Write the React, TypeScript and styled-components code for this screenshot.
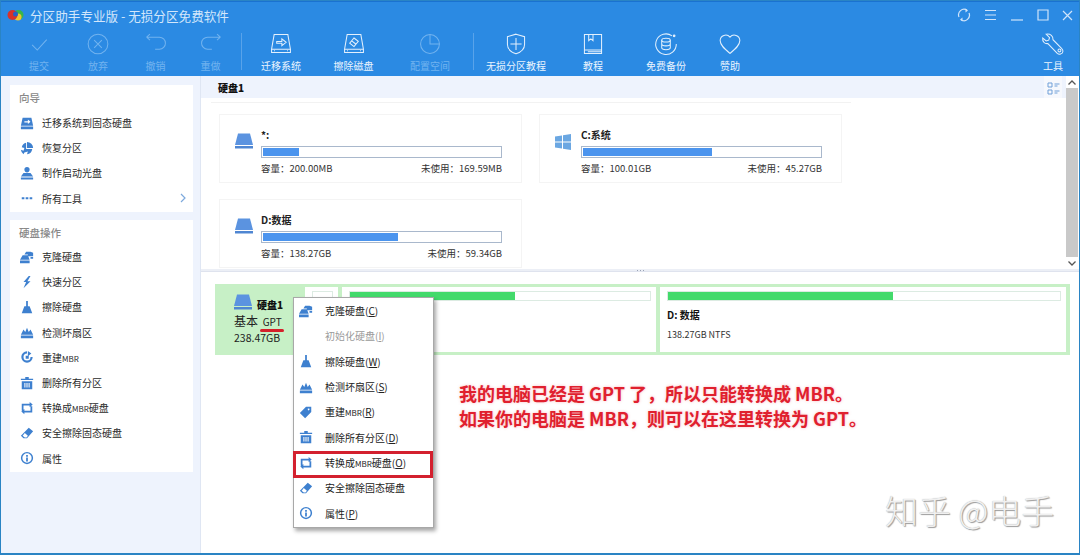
import { ReactNode } from 'react'
import styled, { createGlobalStyle } from 'styled-components'

const CJK = `"Noto Sans CJK SC", "Noto Sans", sans-serif`

const GlobalStyle = createGlobalStyle`
  html, body { margin: 0; padding: 0; background: #fff; }
  * { box-sizing: border-box; }
  body { font-family: ${CJK}; overflow: hidden; }
`

const Small = styled.span`
  font-size: 8px;
`

const toolIcons: Record<string, ReactNode> = {
  check: <path d="M6 15l6 6L23 9" />,
  cancel: (
    <>
      <circle cx="14" cy="14" r="11.5" />
      <path d="M9.5 9.5l9 9M18.5 9.5l-9 9" />
    </>
  ),
  undo: <path d="M3 6h15a6.5 6.5 0 0 1 0 14h-5M3 6l4-3.5M3 6l4 3.5" />,
  redo: <path d="M25 6H10a6.5 6.5 0 0 0 0 14h5M25 6l-4-3.5M25 6l-4 3.5" />,
  migrate: (
    <>
      <path d="M6 3h16l3 17H3zM3 20h22v4H3zM6 22h1M21 22h1" />
      <path d="M9 11h6V8l5 4-5 4v-3H9z" />
    </>
  ),
  wipe: (
    <>
      <path d="M6 3h16l3 17H3zM3 20h22v4H3zM6 22h1M21 22h1" />
      <path d="M14 7l5 4-5 6-5-4zM11 10l5 4" />
    </>
  ),
  pie: (
    <>
      <circle cx="14" cy="14" r="11" />
      <path d="M14 3v11h11" />
    </>
  ),
  shield: (
    <>
      <path d="M14 2.5l10 3v9c0 5.5-4.5 9-10 11-5.5-2-10-5.5-10-11v-9z" />
      <path d="M14 7v14M7.5 14h13" />
    </>
  ),
  book: (
    <>
      <path d="M4 3h20v22H4zM4 21h20M8 23h16" />
      <path d="M9 3v7l2.5-2 2.5 2V3" />
    </>
  ),
  backup: (
    <>
      <path d="M21 4.5A12 12 0 1 0 26 14" />
      <circle cx="23.5" cy="4.5" r="1" fill="#fff" />
      <ellipse cx="14" cy="9.5" rx="5" ry="2.2" />
      <path d="M9 9.5v9c0 1.2 2.2 2.2 5 2.2s5-1 5-2.2v-9M9 14c0 1.2 2.2 2.2 5 2.2s5-1 5-2.2" />
    </>
  ),
  heart: <path d="M14 25C8 20 2.5 15.5 2.5 10A6.5 6.5 0 0 1 14 6a6.5 6.5 0 0 1 11.5 4c0 5.5-5.5 10-11.5 15z" />,
  wrench: (
    <>
      <path d="M6 2.5L10 6.5l-1 3-3 1-4-3.5c-.5 4 2 7 6 6.5L19 25c2 1.8 6 1 6.5-2 .5-2-.5-3-1.5-4L14 9c.5-4-3-7.5-8-6.5z" />
      <circle cx="21.5" cy="21.5" r="1.7" />
    </>
  ),
}

const sideIcons: Record<string, ReactNode> = {
  migrate: <path d="M3 2h10l2 9H1zM1 12h14v3H1zM5 6h4V4l3 2.5L9 9V7.5H5z" fillRule="evenodd" />,
  restore: <path d="M8 1a7 7 0 0 1 7 7H8zM7 2v7h7a7 7 0 0 1-6 6l1-3-4 1-1 2a7 7 0 0 1-3-5l3 1 1-3-3-1a7 7 0 0 1 5-5z" />,
  boot: <path d="M8 1a3 3 0 0 1 3 3c0 2-1.5 3.5-3 3.5S5 6 5 4a3 3 0 0 1 3-3zM4 8h8l3 4H1zM1 13h14v2.5H1z" />,
  more: <path d="M2 7h3v2.5H2zM6.5 7h3v2.5h-3zM11 7h3v2.5h-3z" />,
  clone: <path d="M7 2h5l3 1v4H9V5H5zM3 6h6l2 5H0zM0 12h11v3H0zM12 8h3v2h-3z" />,
  speed: <path d="M10 1L4 8h3l-3 7 8-8H8.5L12 1z" />,
  broom: <path d="M7 1h2v6h2l3 8H2l3-8h2z" />,
  scan: <path d="M1 11l3-6 2 3 2-5 2 5 2-3 3 6zM1 12h14v3H1z" fillRule="evenodd" />,
  rebuild: <path d="M8 1.5a6.5 6.5 0 1 0 6.5 6.5H12A4 4 0 1 1 8 4zM9 1l4 3-4 3zM6.5 6.5H10V10H6.5z" />,
  trash: <path d="M6 1h4v2h5v1.5H1V3h5zM2 6h12v9H2zM5 8v5h1.2V8zM7.4 8v5h1.2V8zM9.8 8v5H11V8z" fillRule="evenodd" />,
  convert: <path d="M2 3h9V1l3.5 3L11 7V5H4v6H2zM14 13H5v2l-3.5-3L5 9v2h7V6h2z" />,
  erase: <path d="M10 2l5 4-7 8H4L1 11zM3 11l2.5 2h2L9 11 5.5 8z" fillRule="evenodd" />,
  info: <path d="M8 1a7 7 0 1 1 0 14A7 7 0 0 1 8 1zm0 1.7a5.3 5.3 0 1 0 0 10.6A5.3 5.3 0 0 0 8 2.7zM7 4.5h2v2H7zM7 7.5h2V12H7z" fillRule="evenodd" />,
  tag: <path d="M8 2h6v6l-7 7-6-6zM11 4a1 1 0 1 0 .01 0z" fillRule="evenodd" />,
}

const guideRows = [
  { icon: 'migrate', label: '迁移系统到固态硬盘' },
  { icon: 'restore', label: '恢复分区' },
  { icon: 'boot', label: '制作启动光盘' },
  { icon: 'more', label: '所有工具', arrow: true },
]

const diskRows = [
  { icon: 'clone', label: '克隆硬盘' },
  { icon: 'speed', label: '快速分区' },
  { icon: 'broom', label: '擦除硬盘' },
  { icon: 'scan', label: '检测坏扇区' },
  { icon: 'rebuild', label: <>重建<Small>MBR</Small></> },
  { icon: 'trash', label: '删除所有分区' },
  { icon: 'convert', label: <>转换成<Small>MBR</Small>硬盘</> },
  { icon: 'erase', label: '安全擦除固态硬盘' },
  { icon: 'info', label: '属性' },
]

type MenuItem = { icon?: string; label: ReactNode; key?: string; off?: boolean; hot?: boolean }

const menuRows: MenuItem[] = [
  { icon: 'clone', label: '克隆硬盘', key: 'C' },
  { label: '初始化硬盘', key: 'I', off: true },
  { icon: 'broom', label: '擦除硬盘', key: 'W' },
  { icon: 'scan', label: '检测坏扇区', key: 'S' },
  { icon: 'tag', label: <>重建<Small>MBR</Small></>, key: 'R' },
  { icon: 'trash', label: '删除所有分区', key: 'D' },
  { icon: 'convert', label: <>转换成<Small>MBR</Small>硬盘</>, key: 'O', hot: true },
  { icon: 'erase', label: '安全擦除固态硬盘' },
  { icon: 'info', label: '属性', key: 'P' },
]

type ToolItem = { icon?: string; label?: string; w?: number; off?: boolean; divider?: boolean }

const tools: ToolItem[] = [
  { icon: 'check', label: '提交', w: 58, off: true },
  { icon: 'cancel', label: '放弃', w: 60, off: true },
  { icon: 'undo', label: '撤销', w: 55, off: true },
  { icon: 'redo', label: '重做', w: 55, off: true },
  { divider: true },
  { icon: 'migrate', label: '迁移系统', w: 72 },
  { icon: 'wipe', label: '擦除磁盘', w: 73 },
  { icon: 'pie', label: '配置空间', w: 80, off: true },
  { divider: true },
  { icon: 'shield', label: '无损分区教程', w: 78 },
  { icon: 'book', label: '教程', w: 76 },
  { icon: 'backup', label: '免费备份', w: 70 },
  { icon: 'heart', label: '赞助', w: 58 },
]

const cards = [
  { name: '*:', win: false, pct: 15, cap: '200.00MB', free: '169.59MB' },
  { name: 'C:系统', win: true, pct: 54.5, cap: '100.01GB', free: '45.27GB' },
  { name: 'D:数据', win: false, pct: 57, cap: '138.27GB', free: '59.34GB' },
]

const DriveIcon = ({ size = 18 }: { size?: number }) => (
  <svg width={size} height={size} viewBox="0 0 18 18">
    <path d="M3 1.5h12l3 11.5H0z" fill="#5b93e0" />
    <path d="M0 14h18v2.5H0z" fill="#4f86d2" />
  </svg>
)

const WinIcon = () => (
  <svg width="16" height="16" viewBox="0 0 16 16">
    <path d="M0 2.5l7-1v6H0zM8 1.3L16 0v7.5H8zM0 8.5h7v6l-7-1zM8 8.5h8V16l-8-1.3z" fill="#6ba7e2" />
  </svg>
)

const SideIcon = ({ name }: { name: string }) => (
  <svg width="14" height="14" viewBox="0 0 16 16" fill="#3e80cf">
    {sideIcons[name]}
  </svg>
)

export default function App() {
  return (
    <Window>
      <GlobalStyle />
      <TitleBar>
        <svg width="17" height="14" viewBox="0 0 17 14">
          <circle cx="11.5" cy="7" r="5" fill="#39b54a" />
          <circle cx="11" cy="9" r="3.5" fill="#f0c330" />
          <circle cx="5.5" cy="7" r="5" fill="#d8322a" />
          <circle cx="8.5" cy="6" r="2.5" fill="#2b5fc0" />
        </svg>
        <TitleText>分区助手专业版 - 无损分区免费软件</TitleText>
        <WinControls>
          <svg width="14" height="14" viewBox="0 0 14 14">
            <path d="M2 9A5.5 5.5 0 0 1 10 2.2M12 5a5.5 5.5 0 0 1-8 6.8" />
            <path d="M8.5 .5l2.5 2-2.5 2zM5.5 9.5l-2.5 2 2.5 2z" fill="#cfe4fa" stroke="none" />
          </svg>
          <svg width="13" height="12" viewBox="0 0 13 12">
            <path d="M1 1.5h11M1 6h11M1 10.5h11" />
          </svg>
          <svg width="14" height="12" viewBox="0 0 14 12">
            <path d="M1 11h12" />
          </svg>
          <svg width="12" height="12" viewBox="0 0 12 12">
            <path d="M1 1h10v10H1z" />
          </svg>
          <svg width="11" height="11" viewBox="0 0 11 11">
            <path d="M1 1l9 9M10 1l-9 9" />
          </svg>
        </WinControls>
      </TitleBar>

      <Toolbar>
        {tools.map((t, i) =>
          t.divider ? (
            <ToolDivider key={i} />
          ) : (
            <Tool key={i} $w={t.w!} $off={t.off}>
              <svg width="24" height="24" viewBox="0 0 28 28">
                {toolIcons[t.icon!]}
              </svg>
              <span>{t.label}</span>
            </Tool>
          ),
        )}
        <ToolSpacer />
        <Tool $w={46}>
          <svg width="24" height="24" viewBox="0 0 28 28">
            {toolIcons.wrench}
          </svg>
          <span>工具</span>
        </Tool>
      </Toolbar>

      <Body>
        <Sidebar>
          <SidePanel $h={127}>
            <SideTitle $h={22}>向导</SideTitle>
            {guideRows.map((r) => (
              <SideRow key={r.icon}>
                <SideIcon name={r.icon} />
                <span>{r.label}</span>
                {r.arrow && (
                  <Chevron width="6" height="10" viewBox="0 0 6 10">
                    <path d="M1 1l4 4-4 4" />
                  </Chevron>
                )}
              </SideRow>
            ))}
          </SidePanel>
          <SidePanel $h={252}>
            <SideTitle $h={21}>硬盘操作</SideTitle>
            {diskRows.map((r) => (
              <SideRow key={r.icon}>
                <SideIcon name={r.icon} />
                <span>{r.label}</span>
              </SideRow>
            ))}
          </SidePanel>
        </Sidebar>

        <Main>
          <TopPane>
            <TopContent>
              <PaneHeader>
                <strong>硬盘1</strong>
                <ViewToggle>
                  <svg width="13" height="14" viewBox="0 0 13 14">
                    <path d="M1 1h4v4H1zM1 8h4v4H1zM7.5 2h5M7.5 4h3M7.5 9h5M7.5 11h3" fill="none" stroke="#6f9fd8" />
                  </svg>
                </ViewToggle>
              </PaneHeader>
              <CardGrid>
                {cards.map((c) => (
                  <Card key={c.name}>
                    <CardIcon>{c.win ? <WinIcon /> : <DriveIcon />}</CardIcon>
                    <CardBody>
                      <CardName>{c.name}</CardName>
                      <UsageBar>
                        <UsageFill style={{ width: `${c.pct}%` }} />
                      </UsageBar>
                      <CardStats>
                        <span>容量：{c.cap}</span>
                        <span>未使用：{c.free}</span>
                      </CardStats>
                    </CardBody>
                  </Card>
                ))}
              </CardGrid>
            </TopContent>
            <ScrollBar>
              <ScrollArrow>
                <svg width="8" height="5" viewBox="0 0 8 5">
                  <path d="M.5 4.5L4 1l3.5 3.5" fill="none" stroke="#555" strokeWidth="1.3" />
                </svg>
              </ScrollArrow>
              <ScrollThumb />
              <ScrollArrow>
                <svg width="8" height="5" viewBox="0 0 8 5">
                  <path d="M.5 .5L4 4l3.5-3.5" fill="none" stroke="#555" strokeWidth="1.3" />
                </svg>
              </ScrollArrow>
            </ScrollBar>
          </TopPane>

          <Splitter>
            <i />
            <i />
            <i />
          </Splitter>

          <BottomPane>
            <DiskMap>
              <DiskInfo>
                <DiskHead>
                  <DriveIcon />
                  <strong>硬盘1</strong>
                </DiskHead>
                <DiskKind>
                  基本 <GptTag>GPT</GptTag>
                </DiskKind>
                <DiskSize>238.47GB</DiskSize>
              </DiskInfo>
              <PartTile $w={33}>
                <PartBar />
              </PartTile>
              <PartTile $w={314}>
                <PartBar>
                  <PartFill style={{ width: '55%' }} />
                </PartBar>
              </PartTile>
              <PartTile $w={406}>
                <PartBar>
                  <PartFill style={{ width: '57.3%' }} />
                </PartBar>
                <PartName>D: 数据</PartName>
                <PartMeta>138.27GB NTFS</PartMeta>
              </PartTile>
            </DiskMap>
          </BottomPane>
        </Main>
      </Body>

      <ContextMenu>
        {menuRows.map((m, i) => (
          <MenuRow key={i} $hot={m.hot} $off={m.off}>
            <MenuIcon>{m.icon && <SideIcon name={m.icon} />}</MenuIcon>
            <span>
              {m.label}
              {m.key && (
                <>
                  (<u>{m.key}</u>)
                </>
              )}
            </span>
          </MenuRow>
        ))}
      </ContextMenu>

      <Note>
        我的电脑已经是 GPT 了，所以只能转换成 MBR。
        <br />
        如果你的电脑是 MBR，则可以在这里转换为 GPT。
      </Note>
      <Watermark>知乎 @电手</Watermark>
    </Window>
  )
}

const Window = styled.div`
  position: relative;
  width: 1080px;
  height: 555px;
  display: flex;
  flex-direction: column;
  border: 1px solid #2a84c4;
  border-bottom-width: 2px;
  background: #fff;
  color: #222;
  overflow: hidden;
`

const TitleBar = styled.div`
  height: 26px;
  flex: none;
  display: flex;
  align-items: center;
  padding: 1px 5px 0 6px;
  background: #2b8ae3;
  border-top: 1px solid #1a72d0;
`

const TitleText = styled.div`
  margin-left: 6px;
  font-size: 12.6px;
  color: #d3e7fb;
`

const WinControls = styled.div`
  margin-left: auto;
  display: flex;
  align-items: center;
  gap: 13px;
  padding-right: 1px;

  svg {
    fill: none;
    stroke: #cfe4fa;
    stroke-width: 1.2;
  }
`

const Toolbar = styled.div`
  height: 49px;
  flex: none;
  display: flex;
  align-items: stretch;
  padding: 0 3px 0 9px;
  background: #2b8ae3;
`

const Tool = styled.div<{ $w: number; $off?: boolean }>`
  width: ${(p) => p.$w}px;
  flex: none;
  display: flex;
  flex-direction: column;
  align-items: center;
  padding-top: 5px;
  gap: 2px;
  font-size: 10px;
  line-height: 15px;
  white-space: nowrap;
  color: ${(p) => (p.$off ? '#72b3ef' : '#eaf4fe')};

  svg {
    fill: none;
    stroke: ${(p) => (p.$off ? '#72b3ef' : '#e3f0fd')};
    stroke-width: 1.2;
  }
`

const ToolDivider = styled.div`
  width: 1px;
  margin: 6px 3px 6px 3px;
  background: #59a3ea;
`

const ToolSpacer = styled.div`
  flex: 1;
`

const Body = styled.div`
  flex: 1;
  min-height: 0;
  display: flex;
`

const Sidebar = styled.aside`
  width: 200px;
  flex: none;
  display: flex;
  flex-direction: column;
  gap: 8px;
  padding: 9px 7px 0 9px;
  background: #eef3fd;
  border-right: 1px solid #dfe6f3;
`

const SidePanel = styled.section<{ $h: number }>`
  height: ${(p) => p.$h}px;
  padding-top: 3px;
  background: #fff;
`

const SideTitle = styled.div<{ $h: number }>`
  height: ${(p) => p.$h}px;
  line-height: 20px;
  padding-left: 9px;
  font-size: 10.5px;
  font-weight: 500;
  color: #888;
`

const SideRow = styled.div`
  height: 25.2px;
  display: flex;
  align-items: center;
  gap: 8px;
  padding: 0 6px 0 10px;
  font-size: 10px;
  color: #2a2a2a;
`

const Chevron = styled.svg`
  margin-left: auto;
  margin-right: 1px;
  fill: none;
  stroke: #7da9dc;
  stroke-width: 1.2;
`

const Main = styled.main`
  flex: 1;
  min-width: 0;
  display: flex;
  flex-direction: column;
`

const TopPane = styled.div`
  height: 193px;
  flex: none;
  display: flex;
`

const TopContent = styled.div`
  flex: 1;
  min-width: 0;
`

const PaneHeader = styled.div`
  height: 22px;
  display: flex;
  align-items: center;
  justify-content: space-between;
  padding: 0 4px 0 17px;
  background: #eef3fd;
  font-size: 10px;
  color: #111;

  strong {
    font-weight: 900;
  }
`

const ViewToggle = styled.div`
  width: 18px;
  height: 22px;
  padding-top: 3px;
  display: flex;
  align-items: center;
  justify-content: center;
  background: #f6f8fd;
`

const CardGrid = styled.div`
  margin: 4px 0 0 10px;
  padding: 11px 0 0 8px;
  border-top: 1px solid #f2f2f2;
  width: 640px;
  display: grid;
  grid-template-columns: 303px 303px;
  grid-auto-rows: 69px;
  column-gap: 17px;
  row-gap: 16px;
`

const Card = styled.div`
  display: flex;
  padding: 15px 19px 0 15px;
  border: 1px solid #f4f4f4;
`

const CardIcon = styled.div`
  width: 18px;
  flex: none;
  margin-right: 8px;
  padding-top: 1px;
`

const CardBody = styled.div`
  flex: 1;
  min-width: 0;
`

const CardName = styled.div`
  height: 16px;
  line-height: 10px;
  font-size: 10px;
  font-weight: 700;
  color: #222;
`

const UsageBar = styled.div`
  height: 12px;
  padding: 1px;
  background: #fff;
  border: 1px solid #a9b8cc;
`

const UsageFill = styled.div`
  height: 100%;
  background: #4b94ee;
`

const CardStats = styled.div`
  display: flex;
  justify-content: space-between;
  margin-top: 3px;
  font-size: 9.5px;
  line-height: 14px;
  color: #333;
`

const ScrollBar = styled.div`
  width: 12px;
  flex: none;
  margin-right: 1px;
  display: flex;
  flex-direction: column;
`

const ScrollArrow = styled.div`
  height: 12px;
  flex: none;
  display: flex;
  align-items: center;
  justify-content: center;
`

const ScrollThumb = styled.div`
  flex: 1;
  background: #c9c9c9;
`

const Splitter = styled.div`
  height: 3px;
  flex: none;
  display: flex;
  justify-content: center;
  align-items: center;
  gap: 2px;
  background: #eceff6;
  border-bottom: 1px solid #dfe3ee;

  i {
    width: 1px;
    height: 1px;
    background: #9aa3b5;
  }
`

const BottomPane = styled.div`
  flex: 1;
  padding: 12px 9px 0 14px;
  background: #fff;
`

const DiskMap = styled.div`
  height: 71px;
  display: flex;
  gap: 4px;
  padding: 3px 4px 3px 0;
  background: #c7f0c6;
`

const DiskInfo = styled.div`
  width: 86px;
  flex: none;
  padding: 6px 0 0 19px;
`

const DiskHead = styled.div`
  display: flex;
  align-items: center;
  gap: 5px;
  height: 18px;
  font-size: 10px;
  color: #111;

  strong {
    font-weight: 900;
    padding-top: 4px;
  }
`

const DiskKind = styled.div`
  margin-top: 1px;
  font-size: 12px;
  line-height: 17px;
  color: #222;
  white-space: nowrap;
`

const GptTag = styled.span`
  position: relative;
  margin-left: 2px;
  font-size: 10px;

  &::after {
    content: '';
    position: absolute;
    left: -3px;
    right: -2px;
    bottom: -3px;
    height: 3px;
    border-radius: 2px;
    background: #d5202b;
  }
`

const DiskSize = styled.div`
  margin-top: 1px;
  font-size: 10.5px;
  line-height: 14px;
  color: #222;
`

const PartTile = styled.div<{ $w: number }>`
  width: ${(p) => p.$w}px;
  flex: none;
  padding: 4px 5px 0 7px;
  background: #fff;
`

const PartBar = styled.div`
  height: 10px;
  background: #fff;
  border: 1px solid #dcebe2;
`

const PartFill = styled.div`
  height: 100%;
  background: #43da6b;
`

const PartName = styled.div`
  margin-top: 6px;
  font-size: 10px;
  line-height: 15px;
  font-weight: 700;
  color: #111;
`

const PartMeta = styled.div`
  margin-top: 6px;
  font-size: 9px;
  line-height: 13px;
  color: #333;
`

const ContextMenu = styled.div`
  position: absolute;
  left: 292px;
  top: 296px;
  width: 141px;
  height: 231px;
  padding: 0 0 1px;
  display: grid;
  grid-template-rows: repeat(9, 1fr);
  background: #fff;
  border: 1px solid #a8a8a8;
  box-shadow: 2px 3px 4px rgba(0, 0, 0, 0.35);
`

const MenuRow = styled.div<{ $hot?: boolean; $off?: boolean }>`
  position: relative;
  display: flex;
  align-items: center;
  font-size: 10px;
  color: ${(p) => (p.$off ? '#9a9a9a' : '#222')};
  white-space: nowrap;

  &::after {
    content: '';
    display: ${(p) => (p.$hot ? 'block' : 'none')};
    position: absolute;
    inset: 1px 0 -3px -1px;
    border: 3px solid #d3202e;
  }
`

const MenuIcon = styled.div`
  width: 31px;
  align-self: stretch;
  flex: none;
  display: flex;
  align-items: center;
  padding-left: 5px;
`

const Note = styled.div`
  position: absolute;
  left: 458px;
  top: 380px;
  font-size: 18px;
  line-height: 25px;
  font-weight: 700;
  white-space: nowrap;
  color: #e0202e;
  text-shadow: 0 0 3px rgba(235, 60, 70, 0.35);
`

const Watermark = styled.div`
  position: absolute;
  left: 884px;
  top: 489px;
  font-size: 33px;
  line-height: 40px;
  font-weight: 300;
  white-space: nowrap;
  color: #f0f0f0;
  text-shadow: 1px 1px 1px #999, 0 0 1px #aaa;
`
